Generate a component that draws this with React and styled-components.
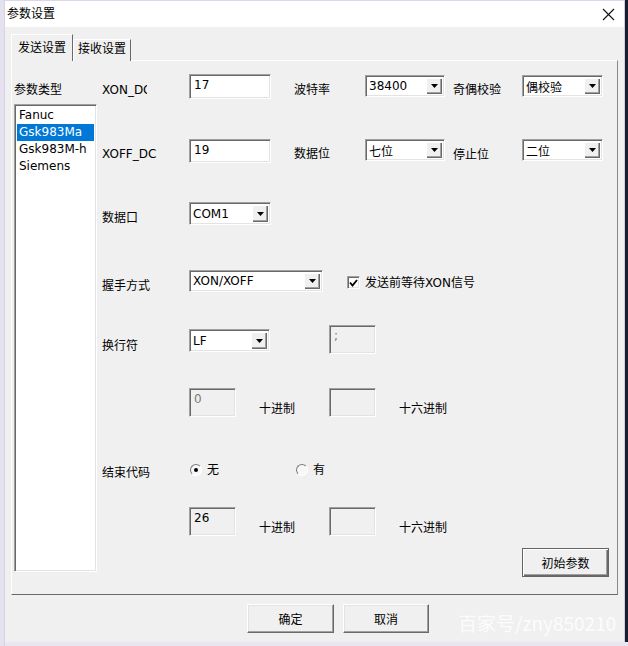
import styled, { createGlobalStyle } from "styled-components";

const GlobalStyle = createGlobalStyle`
  html, body { margin: 0; padding: 0; background: #e9e5f1; }
  body {
    font-family: "DejaVu Sans", "Noto Sans CJK SC", sans-serif;
    font-size: 12px;
    color: #000;
  }
  * { box-sizing: border-box; }
`;

const sunken = `
  border-top: 1px solid #a0a0a0;
  border-left: 1px solid #a0a0a0;
  border-right: 1px solid #fff;
  border-bottom: 1px solid #fff;
  box-shadow: inset 1px 1px 0 #696969, inset -1px -1px 0 #e3e3e3;
`;

const Screen = styled.div`
  width: 628px;
  height: 646px;
  display: flex;
  background: #e9e5f1;
  overflow: hidden;
  position: relative;
`;

const Desktop = styled.div`
  width: 5px;
  background: #e6e1ef;
  border-right: 1px solid #d8d2e6;
`;

const DarkEdge = styled.div`
  flex: 1;
  height: 642px;
  background: #14202e;
`;

const Window = styled.div`
  width: 620px;
  height: 642px;
  display: flex;
  flex-direction: column;
  background: #f0f0f0;
  border-right: 1px solid #d3cde2;
`;

const TitleBar = styled.div`
  height: 27px;
  flex-shrink: 0;
  background: #fff;
  border-top: 1px solid #ddd6ea;
  display: flex;
  align-items: center;
  justify-content: space-between;
  padding: 0 9px 0 2px;
  line-height: 16px;
`;

const Body = styled.div`
  flex: 1;
  display: flex;
  flex-direction: column;
  padding-left: 6px;
`;

const TabStrip = styled.div`
  margin-top: 7px;
  height: 27px;
  display: flex;
  align-items: flex-end;
  position: relative;
  z-index: 1;
  margin-bottom: -1px;
`;

const Tab = styled.div`
  width: ${(p) => (p.$active ? 62 : 58)}px;
  height: ${(p) => (p.$active ? 27 : 22)}px;
  padding-top: ${(p) => (p.$active ? 5 : 1)}px;
  line-height: 16px;
  text-align: center;
  background: #f0f0f0;
  border-top: 1px solid #fff;
  border-left: 1px solid #fff;
  border-right: 1px solid #696969;
`;

const Panel = styled.div`
  width: 607px;
  height: 535px;
  display: flex;
  border-top: 1px solid #fff;
  border-left: 1px solid #fff;
  border-right: 1px solid #8a8a8a;
  border-bottom: 1px solid #696969;
`;

const Side = styled.div`
  width: 83px;
  margin-left: 2px;
  padding-top: 21px;
  display: flex;
  flex-direction: column;
`;

const SideLabel = styled.div`
  height: 16px;
  line-height: 16px;
  margin-bottom: 6px;
  white-space: nowrap;
`;

const List = styled.div`
  height: 468px;
  background: #fff;
  padding: 2px 2px 0 2px;
  ${sunken}
`;

const Item = styled.div`
  height: 17px;
  line-height: 17px;
  padding-left: 2px;
  white-space: nowrap;
  background: ${(p) => (p.$selected ? "#0078d7" : "transparent")};
  color: ${(p) => (p.$selected ? "#fff" : "#000")};
`;

const Form = styled.div`
  flex: 1;
  margin-left: 5px;
  padding-top: 13px;
  display: flex;
  flex-direction: column;
`;

const Row = styled.div`
  display: flex;
  align-items: flex-start;
  height: ${(p) => p.$h}px;
  margin-top: ${(p) => p.$mt || 0}px;
  flex-shrink: 0;
`;

const Label = styled.div`
  width: ${(p) => (p.$w ? `${p.$w}px` : "auto")};
  margin-left: ${(p) => p.$ml || 0}px;
  margin-top: ${(p) => p.$dy || 0}px;
  line-height: 16px;
  white-space: nowrap;
  flex-shrink: 0;
`;

const Clip = styled.span`
  display: inline-block;
  max-width: ${(p) => p.$max}px;
  overflow: hidden;
  vertical-align: top;
`;

const TextBox = styled.div`
  width: ${(p) => p.$w}px;
  height: ${(p) => p.$h}px;
  margin-left: ${(p) => p.$ml || 0}px;
  padding: 3px 0 0 4px;
  line-height: 15px;
  flex-shrink: 0;
  background: ${(p) => (p.$disabled ? "#f0f0f0" : "#fff")};
  color: ${(p) => (p.$muted ? "#7a7a7a" : "#000")};
  ${sunken}
`;

const Combo = styled.div`
  width: ${(p) => p.$w}px;
  height: ${(p) => p.$h}px;
  margin-left: ${(p) => p.$ml || 0}px;
  margin-top: ${(p) => p.$mt || 0}px;
  display: flex;
  flex-shrink: 0;
  background: #fff;
  padding: 2px;
  ${sunken}
`;

const ComboText = styled.div`
  flex: 1;
  padding-left: 1px;
  display: flex;
  align-items: center;
  white-space: nowrap;
`;

const DropButton = styled.div`
  width: 16px;
  height: 100%;
  display: flex;
  align-items: center;
  justify-content: center;
  background: #f0f0f0;
  box-shadow: inset 1px 1px 0 #fff, inset -1px -1px 0 #696969, inset -2px -2px 0 #a0a0a0;
`;

const CheckBox = styled.div`
  width: 13px;
  height: 13px;
  margin-left: ${(p) => p.$ml || 0}px;
  margin-top: ${(p) => p.$mt || 0}px;
  display: flex;
  align-items: center;
  justify-content: center;
  background: #fff;
  flex-shrink: 0;
  ${sunken}
`;

const Radio = styled.div`
  width: 12px;
  height: 12px;
  margin-left: ${(p) => p.$ml || 0}px;
  margin-top: 2px;
  border-radius: 50%;
  border: 1px solid;
  border-color: #7a7a7a #ffffff #ffffff #7a7a7a;
  background: #f7f7f7;
  display: flex;
  align-items: center;
  justify-content: center;
  flex-shrink: 0;

  &::after {
    content: "";
    width: 4px;
    height: 4px;
    border-radius: 50%;
    background: ${(p) => (p.$checked ? "#000" : "transparent")};
  }
`;

const Button = styled.div`
  width: ${(p) => p.$w}px;
  height: 29px;
  margin-left: ${(p) => p.$ml || 0}px;
  display: flex;
  align-items: center;
  justify-content: center;
  flex-shrink: 0;
  background: #f0f0f0;
  border: 1px solid;
  border-color: ${(p) => (p.$default ? "#646464" : "#fff #696969 #696969 #fff")};
  box-shadow: ${(p) =>
    p.$default
      ? "inset 1px 1px 0 #fff, inset -1px -1px 0 #696969, inset -2px -2px 0 #a0a0a0"
      : "inset -1px -1px 0 #a0a0a0, inset 1px 1px 0 #e3e3e3"};
`;

const Footer = styled.div`
  flex: 1;
  display: flex;
  align-items: flex-start;
  padding-top: 9px;
`;

const Watermark = styled.div`
  position: absolute;
  left: 458px;
  top: 610px;
  font-family: "Noto Sans CJK SC", sans-serif;
  font-size: 19px;
  line-height: 26px;
  color: rgba(255, 255, 255, 0.85);
  white-space: nowrap;
`;

const Arrow = () => (
  <svg width="7" height="4" viewBox="0 0 7 4">
    <polygon points="0,0 7,0 3.5,4" fill="#000" />
  </svg>
);

const Select = ({ w, h = 22, ml, mt, children }) => (
  <Combo $w={w} $h={h} $ml={ml} $mt={mt}>
    <ComboText>{children}</ComboText>
    <DropButton>
      <Arrow />
    </DropButton>
  </Combo>
);

const App = () => {
  return (
    <Screen>
      <GlobalStyle />
      <Desktop />
      <Window>
        <TitleBar>
          <span>参数设置</span>
          <svg width="13" height="13" viewBox="0 0 13 13">
            <path d="M1 1 L12 12 M12 1 L1 12" stroke="#111" strokeWidth="1.1" />
          </svg>
        </TitleBar>
        <Body>
          <TabStrip>
            <Tab $active>发送设置</Tab>
            <Tab>接收设置</Tab>
          </TabStrip>
          <Panel>
            <Side>
              <SideLabel>参数类型</SideLabel>
              <List>
                <Item>Fanuc</Item>
                <Item $selected>Gsk983Ma</Item>
                <Item>Gsk983M-h</Item>
                <Item>Siemens</Item>
              </List>
            </Side>
            <Form>
              <Row $h={25}>
                <Label $w={87} $dy={8}>
                  <Clip $max={45}>XON_DC</Clip>
                </Label>
                <TextBox $w={82} $h={25}>17</TextBox>
                <Label $w={71} $ml={23} $dy={8}>波特率</Label>
                <Select w={80} mt={1}>38400</Select>
                <Label $w={69} $ml={8} $dy={8}>奇偶校验</Label>
                <Select w={81} mt={1}>偶校验</Select>
              </Row>
              <Row $h={24} $mt={40}>
                <Label $w={87} $dy={7}>XOFF_DC</Label>
                <TextBox $w={82} $h={24}>19</TextBox>
                <Label $w={71} $ml={23} $dy={7}>数据位</Label>
                <Select w={80}>七位</Select>
                <Label $w={69} $ml={8} $dy={8}>停止位</Label>
                <Select w={81}>二位</Select>
              </Row>
              <Row $h={23} $mt={39}>
                <Label $w={87} $dy={8}>数据口</Label>
                <Select w={82} h={23}>COM1</Select>
              </Row>
              <Row $h={22} $mt={45}>
                <Label $w={87} $dy={8}>握手方式</Label>
                <Select w={134}>XON/XOFF</Select>
                <CheckBox $ml={24} $mt={6}>
                  <svg width="9" height="8" viewBox="0 0 9 8">
                    <path d="M1 3.5 L3.5 6.5 L8 1" stroke="#000" strokeWidth="1.8" fill="none" />
                  </svg>
                </CheckBox>
                <Label $ml={5} $dy={5}>发送前等待XON信号</Label>
              </Row>
              <Row $h={29} $mt={33}>
                <Label $w={87} $dy={13}>换行符</Label>
                <Select w={81} h={23} mt={4}>LF</Select>
                <TextBox $w={47} $h={29} $ml={59} $disabled $muted>;</TextBox>
              </Row>
              <Row $h={29} $mt={34}>
                <TextBox $w={47} $h={29} $ml={87} $disabled $muted>0</TextBox>
                <Label $w={70} $ml={23} $dy={13}>十进制</Label>
                <TextBox $w={47} $h={29} $disabled />
                <Label $ml={23} $dy={13}>十六进制</Label>
              </Row>
              <Row $h={16} $mt={45}>
                <Label $w={88} $dy={3}>结束代码</Label>
                <Radio $checked />
                <Label $ml={5} $dy={0}>无</Label>
                <Radio $ml={77} />
                <Label $ml={5} $dy={0}>有</Label>
              </Row>
              <Row $h={29} $mt={29}>
                <TextBox $w={47} $h={29} $ml={87} $disabled>26</TextBox>
                <Label $w={70} $ml={23} $dy={13}>十进制</Label>
                <TextBox $w={47} $h={29} $disabled />
                <Label $ml={23} $dy={13}>十六进制</Label>
              </Row>
              <Row $h={29} $mt={12}>
                <Button $w={87} $ml={420} $default>初始参数</Button>
              </Row>
            </Form>
          </Panel>
          <Footer>
            <Button $w={87} $ml={236}>确定</Button>
            <Button $w={86} $ml={9}>取消</Button>
          </Footer>
        </Body>
      </Window>
      <DarkEdge />
      <Watermark>百家号/zny850210</Watermark>
    </Screen>
  );
};

export default App;
